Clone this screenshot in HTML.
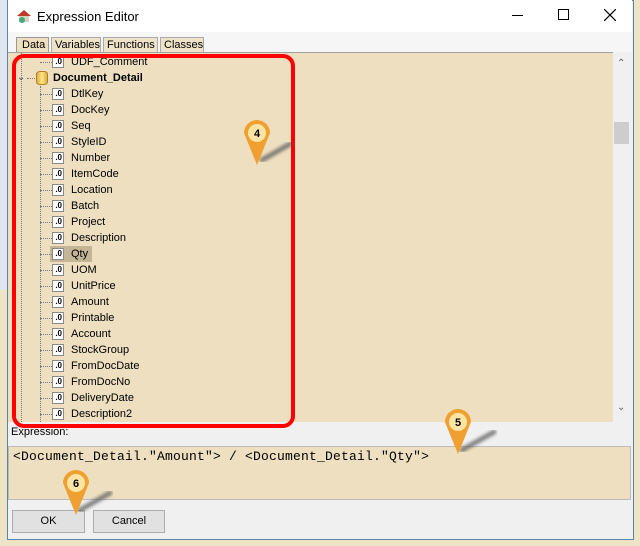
<!DOCTYPE html>
<html><head><style>
*{margin:0;padding:0;box-sizing:border-box}
body{width:640px;height:546px;overflow:hidden;background:#efe3c6;font-family:"Liberation Sans",sans-serif;position:relative}
.abs{position:absolute}
#dlg{left:7px;top:0;width:627px;height:540px;background:#f0f0f0;border:1px solid #5b84ad}
#title{left:8px;top:0;width:624px;height:32px;background:#fff;font-size:13px}
.tree{left:8px;top:52px;width:605px;height:370px;background:#eddfc0;border-top:1px solid #a0a0a0}
.row{position:absolute;left:71px;font-size:11px;height:16px;line-height:16px;color:#000}
.ic{position:absolute;left:52px;width:12px;height:12px;background:#fff;border:1px solid #8a8a8a;font-size:8px;line-height:10px;text-align:right;font-weight:bold;padding-right:1px}
.dh{position:absolute;left:40px;width:12px;border-top:1px dotted #777}
.btn{position:absolute;top:510px;height:23px;background:#e1e1e1;border:1px solid #adadad;font-size:11px;text-align:center;line-height:21px}
</style></head><body>
<div class="abs" style="left:0;top:0;width:7px;height:546px;background:#dfe6ee"></div>
<div class="abs" style="left:0;top:290px;width:7px;height:256px;background:#efe3c6"></div>
<div id="dlg" class="abs"></div>
<div id="title" class="abs">
<svg class="abs" style="left:8px;top:8px" width="16" height="16"><path d="M1 8 L8 2 L15 8 Z" fill="#c0392b"/><rect x="3" y="8" width="10" height="6" fill="#d8d0c0"/><circle cx="6" cy="12" r="3" fill="#4a7"/></svg>
<span class="abs" style="left:29px;top:9px;color:#000">Expression Editor</span>
<div class="abs" style="left:504px;top:15px;width:11px;border-top:1px solid #000"></div>
<div class="abs" style="left:550px;top:9px;width:11px;height:11px;border:1px solid #000"></div>
<svg class="abs" style="left:596px;top:9px" width="12" height="12"><path d="M0 0L12 12M12 0L0 12" stroke="#000" stroke-width="1.2"/></svg>
</div>
<div class="abs" style="left:8px;top:32px;width:624px;height:20px;background:#f6f6f6"></div>
<div class="abs" style="left:16px;top:37px;font-size:11px;height:16px;width:190px">
<div class="abs" style="left:0;top:0;width:33px;height:16px;background:#eddfc0;border:1px solid #999;border-bottom:none;padding-left:5px;line-height:14px">Data</div>
<div class="abs" style="left:35px;top:0;width:50px;height:15px;background:#eee2c8;border:1px solid #aaa;border-bottom:none;padding-left:3px;line-height:14px">Variables</div>
<div class="abs" style="left:87px;top:0;width:55px;height:15px;background:#eee2c8;border:1px solid #aaa;border-bottom:none;padding-left:3px;line-height:14px">Functions</div>
<div class="abs" style="left:144px;top:0;width:44px;height:15px;background:#eee2c8;border:1px solid #aaa;border-bottom:none;padding-left:3px;line-height:14px">Classes</div>
</div>
<div class="tree abs"></div>
<div class="abs" style="left:613px;top:52px;width:18px;height:370px;background:#f0f0f0"></div>
<div class="abs" style="left:614px;top:122px;width:15px;height:22px;background:#cdcdcd"></div>
<div class="abs" style="left:617px;top:58px;font-size:10px;color:#606060">&#8963;</div>
<div class="abs" style="left:617px;top:402px;font-size:10px;color:#606060">&#8964;</div>
<div class="abs" style="left:21px;top:53px;height:369px;border-left:1px dotted #777"></div>
<div class="abs" style="left:40px;top:86px;height:336px;border-left:1px dotted #777"></div>
<div class="abs" style="left:50px;top:246px;width:42px;height:16px;background:#c4b596"></div>
<div id="rows"></div>
<div class="dh" style="top:62px"></div><div class="ic" style="top:56px">.0</div><div class="row" style="top:54px">UDF_Comment</div>
<div class="abs" style="left:17px;top:72px;font-size:10px;color:#444">&#8964;</div>
<div class="abs" style="left:27px;top:78px;width:8px;border-top:1px dotted #777"></div>
<div class="abs" style="left:36px;top:71px;width:12px;height:14px;background:linear-gradient(90deg,#e0b040,#fde58a,#e0b040);border-radius:4px/3px;border:1px solid #b08020"></div>
<div class="row" style="left:53px;top:70px;font-weight:bold">Document_Detail</div>
<script>
var n=["DtlKey","DocKey","Seq","StyleID","Number","ItemCode","Location","Batch","Project","Description","Qty","UOM","UnitPrice","Amount","Printable","Account","StockGroup","FromDocDate","FromDocNo","DeliveryDate","Description2"];
var h="";n.forEach(function(t,i){var y=86+i*16;h+='<div class="dh" style="top:'+(y+8)+'px"></div><div class="ic" style="top:'+(y+2)+'px">.0</div><div class="row" style="top:'+y+'px">'+t+'</div>';});
document.getElementById("rows").outerHTML=h;
</script>
<div class="abs" style="left:11px;top:426px;font-size:11px;color:#000">Expression:</div>
<div class="abs" style="left:8px;top:446px;width:623px;height:54px;background:#eddfc0;border:1px solid #bbb"></div>
<div class="abs" style="left:13px;top:449px;font-family:'Liberation Mono',monospace;font-size:13px;letter-spacing:0.2px;white-space:pre">&lt;Document_Detail."Amount"&gt; / &lt;Document_Detail."Qty"&gt;</div>
<div class="btn" style="left:12px;width:73px">OK</div>
<div class="btn" style="left:93px;width:72px">Cancel</div>
<div class="abs" style="left:12px;top:54px;width:283px;height:374px;border:4px solid #f00;border-radius:12px"></div>
<svg class="abs" style="left:0;top:0" width="640" height="546">
<defs><filter id="b"><feGaussianBlur stdDeviation="1.5"/></filter>
<g id="p"><path d="M-13 0 A13 13 0 1 1 13 0 Q9 10 0 32 Q-9 10 -13 0Z" fill="#f0a030"/><circle r="9" fill="#fbe4a4"/></g></defs>
<path d="M262 160 L290 144" stroke="#555" stroke-width="5" stroke-linecap="round" filter="url(#b)" opacity=".7"/>
<path d="M462 450 L494 432" stroke="#555" stroke-width="5" stroke-linecap="round" filter="url(#b)" opacity=".7"/>
<path d="M80 510 L110 493" stroke="#555" stroke-width="5" stroke-linecap="round" filter="url(#b)" opacity=".7"/>
<use href="#p" x="257" y="133"/><use href="#p" x="458" y="422"/><use href="#p" x="76" y="483"/>
<g font-family="Liberation Sans" font-weight="bold" font-size="11" text-anchor="middle"><text x="257" y="137">4</text><text x="458" y="426">5</text><text x="76" y="487">6</text></g>
</svg>
</body></html>
